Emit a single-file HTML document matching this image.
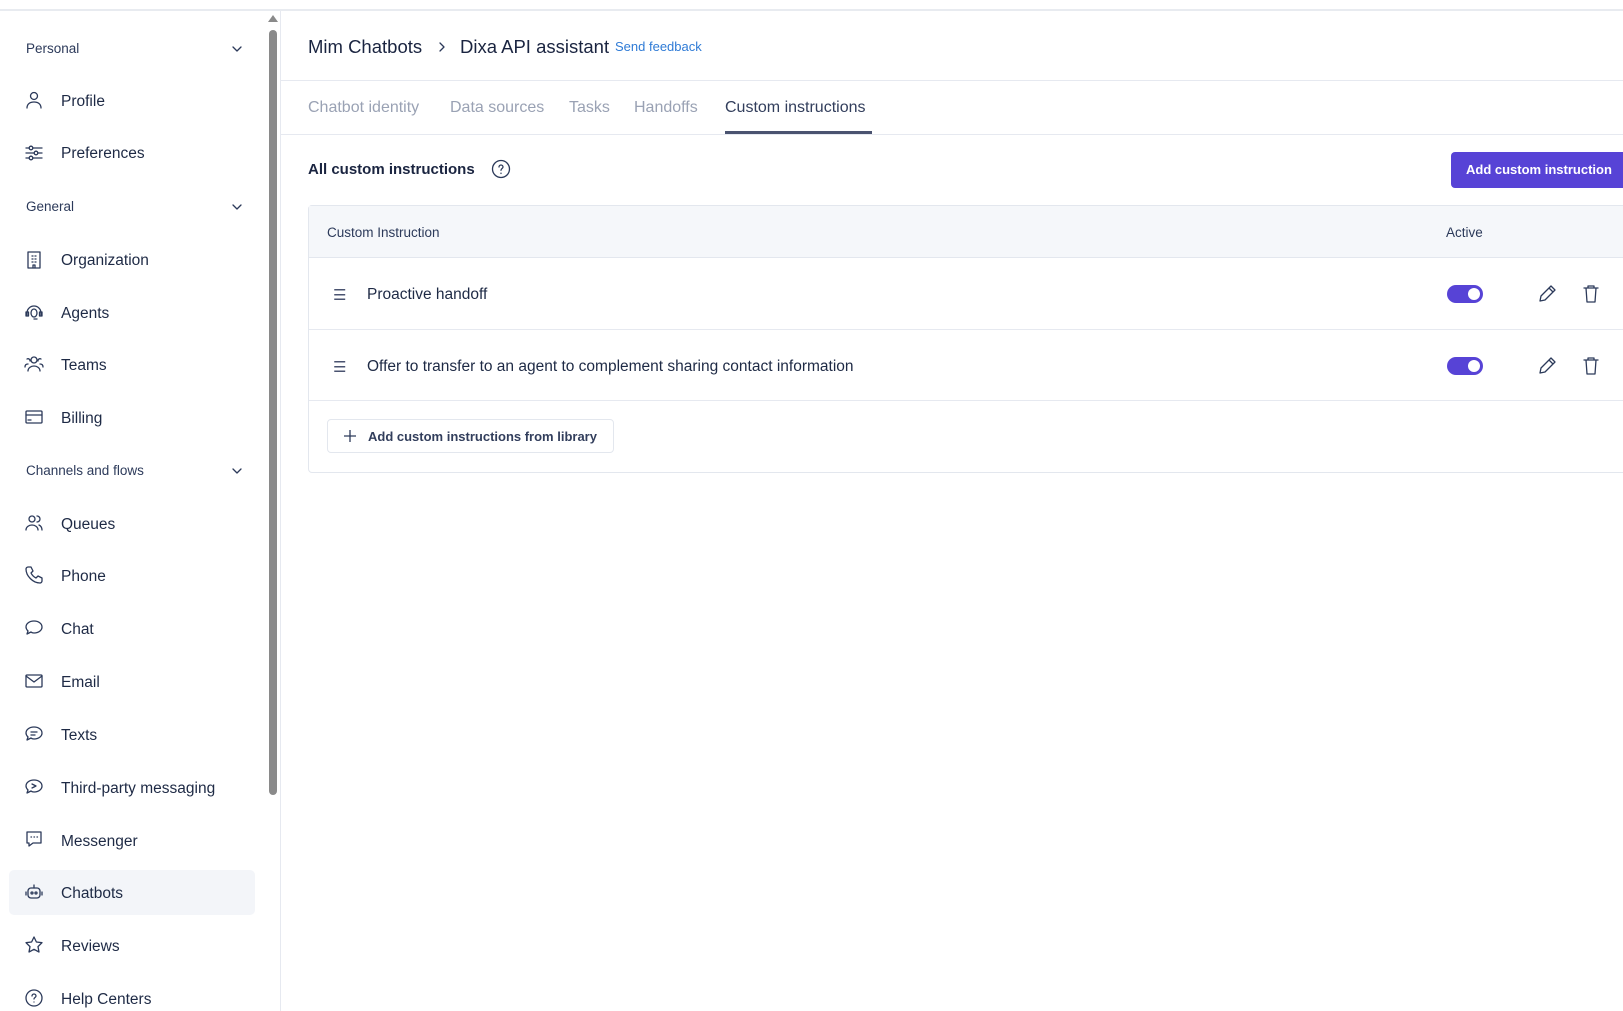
<!DOCTYPE html>
<html><head><meta charset="utf-8"><style>
*{box-sizing:border-box;margin:0;padding:0}
body{width:1623px;height:1011px;overflow:hidden;background:#fff;font-family:"Liberation Sans",sans-serif;color:#1e2a45;position:relative}
.a{position:absolute;white-space:nowrap}
.sec{font-size:13.5px;color:#2c3a5a;left:26px}
.item{left:61px;font-size:15.5px;color:#1e2a45;margin-top:2px}
.ic{position:absolute;left:24px;width:20px;height:20px}
svg{fill:none;stroke:#2c3a5a;stroke-width:1.3;stroke-linecap:round;stroke-linejoin:round}
.tab{top:99px;font-size:16px;color:#9aa2b4}
.hl{height:1px;background:#e6e9f0;position:absolute}
</style></head><body>
<div class="hl" style="left:0;top:9px;width:1623px;height:2px;background:#e8ebf0"></div>
<div class="a" style="left:280px;top:11px;width:1px;height:1000px;background:#e6e9f0"></div>
<div class="a" style="left:269px;top:30px;width:8px;height:765px;background:#8a8a8a;border-radius:4px"></div>
<div class="a" style="left:268px;top:15px;width:0;height:0;border-left:5px solid transparent;border-right:5px solid transparent;border-bottom:7px solid #8a8a8a"></div>

<div class="a sec" style="top:41px">Personal</div>
<div class="a sec" style="top:199px">General</div>
<div class="a sec" style="top:463px">Channels and flows</div>
<svg class="a" style="left:232px;top:45px" width="10" height="8"><path d="M1 2l4 4 4-4"/></svg>
<svg class="a" style="left:232px;top:203px" width="10" height="8"><path d="M1 2l4 4 4-4"/></svg>
<svg class="a" style="left:232px;top:467px" width="10" height="8"><path d="M1 2l4 4 4-4"/></svg>

<div class="a" style="left:9px;top:870px;width:246px;height:45px;background:#f3f5f9;border-radius:5px"></div>

<div class="a item" style="top:91px">Profile</div>
<svg class="ic" style="top:90px" viewBox="0 0 20 20"><circle cx="10" cy="6" r="3.5"/><path d="M3 18c0-4 3-6 7-6s7 2 7 6"/></svg>
<div class="a item" style="top:143px">Preferences</div>
<svg class="ic" style="top:143px" viewBox="0 0 20 20"><path d="M2 5h16M2 10h16M2 15h16"/><circle cx="7" cy="5" r="1.8" fill="#fff"/><circle cx="12" cy="10" r="1.8" fill="#fff"/><circle cx="7" cy="15" r="1.8" fill="#fff"/></svg>
<div class="a item" style="top:250px">Organization</div>
<svg class="ic" style="top:250px" viewBox="0 0 20 20"><rect x="4" y="2" width="12" height="16"/><path d="M8 6h1M11 6h1M8 9h1M11 9h1M8 12h1M11 12h1M9 18v-3h2v3"/></svg>
<div class="a item" style="top:303px">Agents</div>
<svg class="ic" style="top:302px" viewBox="0 0 20 20"><path d="M3 11a7 7 0 0114 0M3 11v2M17 11v2M10 17h3"/><ellipse cx="10" cy="11" rx="3" ry="4"/><rect x="2" y="10" width="2.5" height="4"/><rect x="15.5" y="10" width="2.5" height="4"/></svg>
<div class="a item" style="top:355px">Teams</div>
<svg class="ic" style="top:354px" viewBox="0 0 20 20"><circle cx="10" cy="6" r="3"/><path d="M4 17c0-3 3-5 6-5s6 2 6 5M3 5a2 2 0 013 2M17 5a2 2 0 00-3 2M1 13c0-2 1-3 3-3M19 13c0-2-1-3-3-3"/></svg>
<div class="a item" style="top:408px">Billing</div>
<svg class="ic" style="top:407px" viewBox="0 0 20 20"><rect x="2" y="4" width="16" height="12" rx="1"/><path d="M2 8h16M4 13h3"/></svg>
<div class="a item" style="top:514px">Queues</div>
<svg class="ic" style="top:513px" viewBox="0 0 20 20"><circle cx="8" cy="6" r="3"/><path d="M2 17c0-3 3-5 6-5s6 2 6 5M13 3a3 3 0 010 6M15 12c2 1 3 3 3 5"/></svg>
<div class="a item" style="top:566px">Phone</div>
<svg class="ic" style="top:565px" viewBox="0 0 20 20"><path d="M4 2l3 0 2 4-2 2c1 2 3 4 5 5l2-2 4 2v3c0 1-1 2-2 2C9 18 2 11 2 4c0-1 1-2 2-2z"/></svg>
<div class="a item" style="top:619px">Chat</div>
<svg class="ic" style="top:618px" viewBox="0 0 20 20"><path d="M10 3c5 0 8 3 8 6s-3 6-8 6c-1 0-2 0-3-1l-4 2 1-3c-1-1-2-3-2-4 0-3 3-6 8-6z"/></svg>
<div class="a item" style="top:672px">Email</div>
<svg class="ic" style="top:671px" viewBox="0 0 20 20"><rect x="2" y="4" width="16" height="12" rx="1"/><path d="M2 5l8 6 8-6"/></svg>
<div class="a item" style="top:725px">Texts</div>
<svg class="ic" style="top:724px" viewBox="0 0 20 20"><path d="M10 3c5 0 8 3 8 6s-3 6-8 6c-1 0-2 0-3-1l-4 2 1-3c-1-1-2-3-2-4 0-3 3-6 8-6z"/><path d="M7 8h6M7 11h4"/></svg>
<div class="a item" style="top:778px">Third-party messaging</div>
<svg class="ic" style="top:777px" viewBox="0 0 20 20"><path d="M10 3c5 0 8 3 8 6s-3 6-8 6c-1 0-2 0-3-1l-4 2 1-3c-1-1-2-3-2-4 0-3 3-6 8-6z"/><path d="M8 7l4 2-4 2"/></svg>
<div class="a item" style="top:831px">Messenger</div>
<svg class="ic" style="top:829px" viewBox="0 0 20 20"><path d="M3 3h14v11H9l-4 3v-3H3z"/><path d="M7 8h.5M10 8h.5M13 8h.5"/></svg>
<div class="a item" style="top:883px">Chatbots</div>
<svg class="ic" style="top:882px" viewBox="0 0 20 20"><rect x="4" y="6" width="12" height="10" rx="3"/><path d="M10 3v3M2 10v3M18 10v3"/><circle cx="8" cy="11" r="1"/><circle cx="12" cy="11" r="1"/></svg>
<div class="a item" style="top:936px">Reviews</div>
<svg class="ic" style="top:935px" viewBox="0 0 20 20"><path d="M10 2l2.4 5 5.6.7-4 3.9 1 5.4-5-2.7-5 2.7 1-5.4-4-3.9 5.6-.7z"/></svg>
<div class="a item" style="top:989px">Help Centers</div>
<svg class="ic" style="top:988px" viewBox="0 0 20 20"><circle cx="10" cy="10" r="8"/><path d="M8 8a2 2 0 114 0c0 1.5-2 1.5-2 3M10 14h0"/></svg>

<div class="a" style="left:308px;top:36px;font-size:18.5px;color:#1a2440">Mim Chatbots</div>
<svg class="a" style="left:438px;top:42px" width="8" height="10"><path d="M2 1l4 4-4 4"/></svg>
<div class="a" style="left:460px;top:36px;font-size:18.5px;color:#1a2440">Dixa API assistant</div>
<div class="a" style="left:615px;top:39px;font-size:13px;color:#2f7bd6">Send feedback</div>
<div class="hl" style="left:281px;top:80px;width:1342px"></div>
<div class="a tab" style="left:308px">Chatbot identity</div>
<div class="a tab" style="left:450px">Data sources</div>
<div class="a tab" style="left:569px">Tasks</div>
<div class="a tab" style="left:634px">Handoffs</div>
<div class="a tab" style="left:725px;color:#323e5c">Custom instructions</div>
<div class="hl" style="left:281px;top:134px;width:1342px"></div>
<div class="a" style="left:725px;top:131px;width:147px;height:3px;background:#4a5370"></div>

<div class="a" style="left:308px;top:161px;font-size:15px;font-weight:bold;color:#1a2440">All custom instructions</div>
<svg class="a" style="left:491px;top:159px" width="20" height="20" viewBox="0 0 20 20"><circle cx="10" cy="10" r="8.5"/><path d="M8 8a2 2 0 114 0c0 1.5-2 1.5-2 3.3M10 14.2v.3"/></svg>
<div class="a" style="left:1451px;top:152px;width:180px;height:36px;background:#5743d6;border-radius:4px;color:#fff;font-weight:bold;font-size:13px;padding:10px 0 0 15px">Add custom instruction</div>

<div class="a" style="left:308px;top:205px;width:1330px;height:268px;border:1px solid #e3e7ee;border-radius:4px"></div>
<div class="a" style="left:309px;top:206px;width:1314px;height:52px;background:#f5f7fa;border-bottom:1px solid #e3e7ee"></div>
<div class="a" style="left:327px;top:225px;font-size:13.5px;color:#2c3a5a">Custom Instruction</div>
<div class="a" style="left:1446px;top:225px;font-size:13.5px;color:#2c3a5a">Active</div>
<div class="hl" style="left:309px;top:329px;width:1314px"></div>
<div class="hl" style="left:309px;top:400px;width:1314px"></div>

<div class="a" style="left:333px;top:286px;font-size:15px;color:#4a5370">☰</div>
<div class="a" style="left:367px;top:286px;font-size:15.5px">Proactive handoff</div>
<div class="a" style="left:333px;top:358px;font-size:15px;color:#4a5370">☰</div>
<div class="a" style="left:367px;top:358px;font-size:15.5px">Offer to transfer to an agent to complement sharing contact information</div>

<div class="a" style="left:1447px;top:285px;width:36px;height:18px;border-radius:9px;background:#5743d6"><div style="position:absolute;right:3px;top:3px;width:12px;height:12px;border-radius:50%;background:#fff"></div></div>
<div class="a" style="left:1447px;top:357px;width:36px;height:18px;border-radius:9px;background:#5743d6"><div style="position:absolute;right:3px;top:3px;width:12px;height:12px;border-radius:50%;background:#fff"></div></div>

<svg class="a" style="left:1537px;top:284px" width="20" height="20" viewBox="0 0 20 20"><path d="M14 2l4 4-10 10-5 1 1-5z M12 4l4 4"/></svg>
<svg class="a" style="left:1582px;top:284px" width="18" height="20" viewBox="0 0 18 20"><path d="M2 4h14M6 4V2h6v2M4 4l1 14h8l1-14"/></svg>
<svg class="a" style="left:1537px;top:356px" width="20" height="20" viewBox="0 0 20 20"><path d="M14 2l4 4-10 10-5 1 1-5z M12 4l4 4"/></svg>
<svg class="a" style="left:1582px;top:356px" width="18" height="20" viewBox="0 0 18 20"><path d="M2 4h14M6 4V2h6v2M4 4l1 14h8l1-14"/></svg>

<div class="a" style="left:327px;top:419px;width:287px;height:34px;border:1px solid #e3e7ee;border-radius:4px"></div>
<svg class="a" style="left:344px;top:430px" width="12" height="12"><path d="M6 0v12M0 6h12"/></svg>
<div class="a" style="left:368px;top:429px;font-size:13px;font-weight:bold;color:#323e5c">Add custom instructions from library</div>
</body></html>
